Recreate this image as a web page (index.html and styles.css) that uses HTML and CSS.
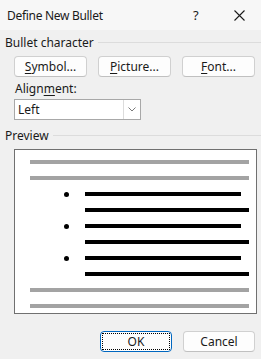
FILE: index.html
```html
<!DOCTYPE html>
<html lang="en">
<head>
    <title>Define New Bullet</title>
    <link rel="stylesheet" href="styles.css">
</head>
<body>
    <div class="dialog">
        <!-- Title Bar -->
        <div class="title-bar">
            <span class="title">Define New Bullet</span>
            <span class="help">?</span>
            <span class="close">
                <svg width="11" height="11" viewBox="0 0 11 11"><path d="M0.5 0.5 L10.5 10.5 M10.5 0.5 L0.5 10.5" stroke="#1a1a1a" stroke-width="1.1"/></svg>
            </span>
        </div>

        <div class="content">
            <!-- Bullet character group -->
            <div class="group-label"><span>Bullet character</span></div>
            <div class="button-row">
                <button class="btn"><u>S</u>ymbol...</button>
                <button class="btn"><u>P</u>icture...</button>
                <button class="btn"><u>F</u>ont...</button>
            </div>

            <div class="field-label">Align<u>m</u>ent:</div>
            <div class="select">
                <span class="select-value">Left</span>
                <span class="select-arrow">
                    <svg width="8" height="5" viewBox="0 0 8 5"><path d="M0.5 0.5 L4 4 L7.5 0.5" fill="none" stroke="#7a7a7a" stroke-width="1"/></svg>
                </span>
            </div>

            <!-- Preview group -->
            <div class="group-label preview-label"><span>Preview</span></div>
            <div class="preview">
                <div class="line gray"></div>
                <div class="line gray"></div>
                <div class="bullet-item">
                    <span class="dot"></span>
                    <div class="line black short"></div>
                </div>
                <div class="line black indent"></div>
                <div class="bullet-item">
                    <span class="dot"></span>
                    <div class="line black short"></div>
                </div>
                <div class="line black indent"></div>
                <div class="bullet-item">
                    <span class="dot"></span>
                    <div class="line black short"></div>
                </div>
                <div class="line black indent"></div>
                <div class="line gray"></div>
                <div class="line gray"></div>
            </div>

            <!-- Footer -->
            <div class="footer">
                <button class="btn default"><span class="focus">OK</span></button>
                <button class="btn">Cancel</button>
            </div>
        </div>
    </div>
</body>
</html>
```

FILE: styles.css
```css
* {
    margin: 0;
    padding: 0;
    box-sizing: border-box;
}

body {
    font-family: "Noto Sans", "Open Sans", sans-serif;
    font-size: 12px;
    color: #1a1a1a;
    background-color: #f0f0f0;
    width: 261px;
    height: 359px;
    overflow: hidden;
}

.dialog {
    width: 261px;
    height: 359px;
    background-color: #f0f0f0;
}

/* Title Bar */
.title-bar {
    height: 30px;
    display: flex;
    align-items: center;
    background-color: #f7f7f7;
    padding-left: 7px;
}

.title {
    flex: 1;
    font-size: 12px;
    letter-spacing: -0.3px;
}

.help {
    width: 14px;
    margin-right: 27px;
    font-size: 13px;
}

.close {
    width: 11px;
    margin-right: 16px;
    display: flex;
}

.content {
    padding: 4px 0 0 5px;
}

/* Group labels with rule */
.group-label {
    display: flex;
    align-items: center;
    gap: 4px;
    height: 16px;
}

.group-label::after {
    content: "";
    flex: 1;
    height: 1px;
    background-color: #dcdcdc;
}

.button-row {
    display: flex;
    gap: 11px;
    margin: 6px 0 0 9px;
}

.btn {
    width: 73px;
    height: 21px;
    font-family: inherit;
    font-size: 12px;
    color: #1a1a1a;
    background-color: #fdfdfd;
    border: 1px solid #d0d0d0;
    border-bottom-color: #c0c0c0;
    border-radius: 4px;
}

.btn u {
    text-decoration-thickness: 1px;
    text-underline-offset: 2px;
}

.field-label {
    margin: 3px 0 0 10px;
    height: 18px;
    line-height: 18px;
}

.field-label u {
    text-underline-offset: 2px;
}

.select {
    margin: 1px 0 0 9px;
    width: 127px;
    height: 21px;
    display: flex;
    background-color: #fff;
    border: 1px solid #a8a8a8;
}

.select-value {
    flex: 1;
    padding-left: 3px;
    line-height: 19px;
}

.select-arrow {
    width: 17px;
    display: flex;
    align-items: center;
    justify-content: center;
    border-left: 1px solid #dcdcdc;
}

.preview-label {
    margin-top: 7px;
}

/* Preview */
.preview {
    margin: 6px 0 0 9px;
    width: 243px;
    height: 165px;
    background-color: #fff;
    border: 1px solid #707070;
    padding: 10px 7px 0 15px;
    display: flex;
    flex-direction: column;
    gap: 12px;
}

.line {
    height: 4px;
    flex-shrink: 0;
}

.gray {
    background-color: #a3a3a3;
}

.black {
    background-color: #000;
}

.bullet-item {
    display: flex;
    align-items: center;
    height: 4px;
}

.dot {
    width: 5px;
    height: 5px;
    border-radius: 50%;
    background-color: #000;
    margin-left: 34px;
    margin-right: 16px;
}

.short {
    width: 156px;
}

.indent {
    margin-left: 55px;
}

/* Footer */
.footer {
    display: flex;
    justify-content: flex-end;
    gap: 11px;
    margin: 17px 6px 0 0;
}

.footer .btn {
    width: 72px;
}

.default {
    border: 1px solid #0067c0;
    padding: 1px;
}

.focus {
    display: flex;
    align-items: center;
    justify-content: center;
    height: 100%;
    border: 1px dotted #000;
}
```
